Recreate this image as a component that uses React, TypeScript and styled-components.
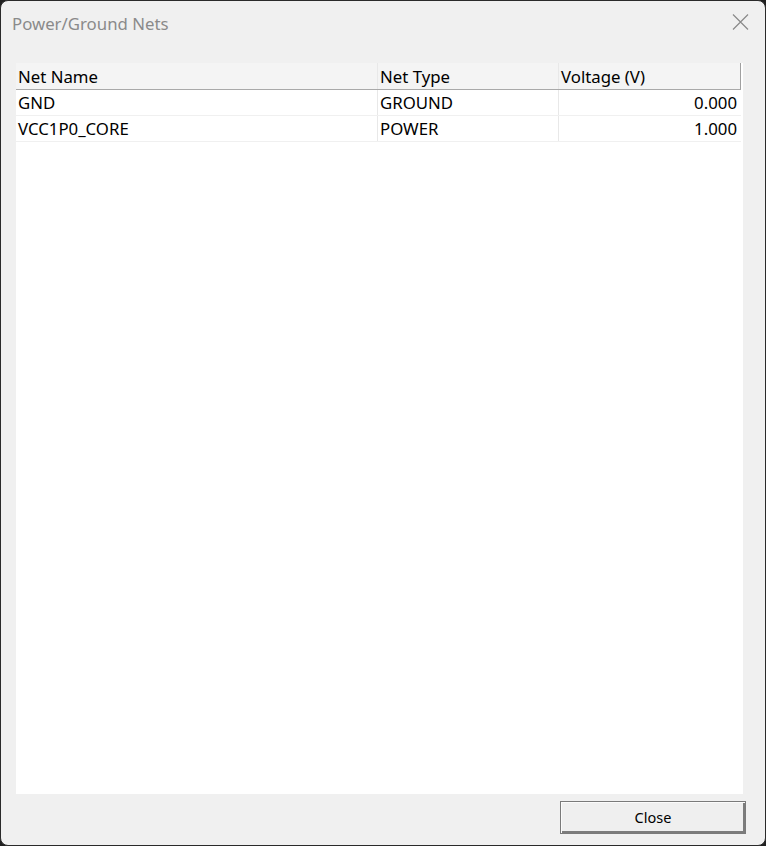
import styled, { createGlobalStyle } from "styled-components";

const GlobalStyle = createGlobalStyle`
  html, body {
    margin: 0;
    padding: 0;
    background: #202020;
  }
  #root {
    width: 766px;
    height: 846px;
  }
`;

const Window = styled.div`
  box-sizing: border-box;
  width: 766px;
  height: 846px;
  border: 1px solid #2a2a2a;
  border-radius: 8px;
  background: #f0f0f0;
  display: flex;
  flex-direction: column;
  font-family: "Noto Sans", "Open Sans", sans-serif;
  overflow: hidden;
`;

const TitleBar = styled.div`
  height: 44px;
  display: flex;
  align-items: center;
  justify-content: space-between;
  padding: 0 16px 0 11px;
`;

const Title = styled.span`
  font-size: 16.8px;
  color: #8a8a8a;
  padding-top: 1px;
`;

const CloseIcon = styled.button`
  border: none;
  background: transparent;
  padding: 0;
  width: 18px;
  height: 18px;
  display: flex;
  align-items: center;
  justify-content: center;
  margin-bottom: 2px;
`;

const Body = styled.div`
  flex: 1;
  display: flex;
  flex-direction: column;
  padding: 18px 22px 11px 15px;
`;

const ListPanel = styled.div`
  flex: 1;
  background: #ffffff;
  padding-right: 2px;
`;

const Row = styled.div<{ $header?: boolean }>`
  display: grid;
  grid-template-columns: 362px 181px 182px;
  height: ${(p) => (p.$header ? "26px" : "25px")};
  background: ${(p) => (p.$header ? "#f4f4f4" : "#ffffff")};
  border-bottom: 1px solid ${(p) => (p.$header ? "#a9a9a9" : "#f0f0f0")};
  ${(p) => (p.$header ? "border-right: 1px solid #a0a0a0;" : "")}
`;

const Cell = styled.div<{ $right?: boolean; $last?: boolean }>`
  display: flex;
  align-items: center;
  justify-content: ${(p) => (p.$right ? "flex-end" : "flex-start")};
  padding: 0 ${(p) => (p.$right ? "4px" : "0")} 0 2px;
  font-size: 16.8px;
  color: #000;
  border-right: ${(p) => (p.$last ? "none" : "1px solid #e8e8e8")};
  white-space: nowrap;
  overflow: hidden;
`;

const Footer = styled.div`
  display: flex;
  justify-content: flex-end;
  padding-top: 7px;
  margin-right: -3px;
`;

const Button = styled.button`
  box-sizing: border-box;
  width: 186px;
  height: 33px;
  background: #efefef;
  border: 1px solid #7a7a7a;
  box-shadow: inset 1px 1px #fbfbfb, inset -2px -2px #7c7c7c;
  font-family: "Noto Sans", "Open Sans", sans-serif;
  font-size: 14.5px;
  color: #000;
  padding: 0 0 2px;
`;

const nets = [
  { name: "GND", type: "GROUND", voltage: 0 },
  { name: "VCC1P0_CORE", type: "POWER", voltage: 1 },
];

export default function App() {
  return (
    <>
      <GlobalStyle />
      <Window>
        <TitleBar>
          <Title>Power/Ground Nets</Title>
          <CloseIcon aria-label="Close">
            <svg width="17" height="16" viewBox="0 0 17 16">
              <path d="M1 0.5 L16 15.5 M16 0.5 L1 15.5" stroke="#8a8a8a" strokeWidth="1.2" fill="none" />
            </svg>
          </CloseIcon>
        </TitleBar>
        <Body>
          <ListPanel>
            <Row $header>
              <Cell>Net Name</Cell>
              <Cell>Net Type</Cell>
              <Cell $last>Voltage (V)</Cell>
            </Row>
            {nets.map((n) => (
              <Row key={n.name}>
                <Cell>{n.name}</Cell>
                <Cell>{n.type}</Cell>
                <Cell $right $last>{n.voltage.toFixed(3)}</Cell>
              </Row>
            ))}
          </ListPanel>
          <Footer>
            <Button>Close</Button>
          </Footer>
        </Body>
      </Window>
    </>
  );
}
